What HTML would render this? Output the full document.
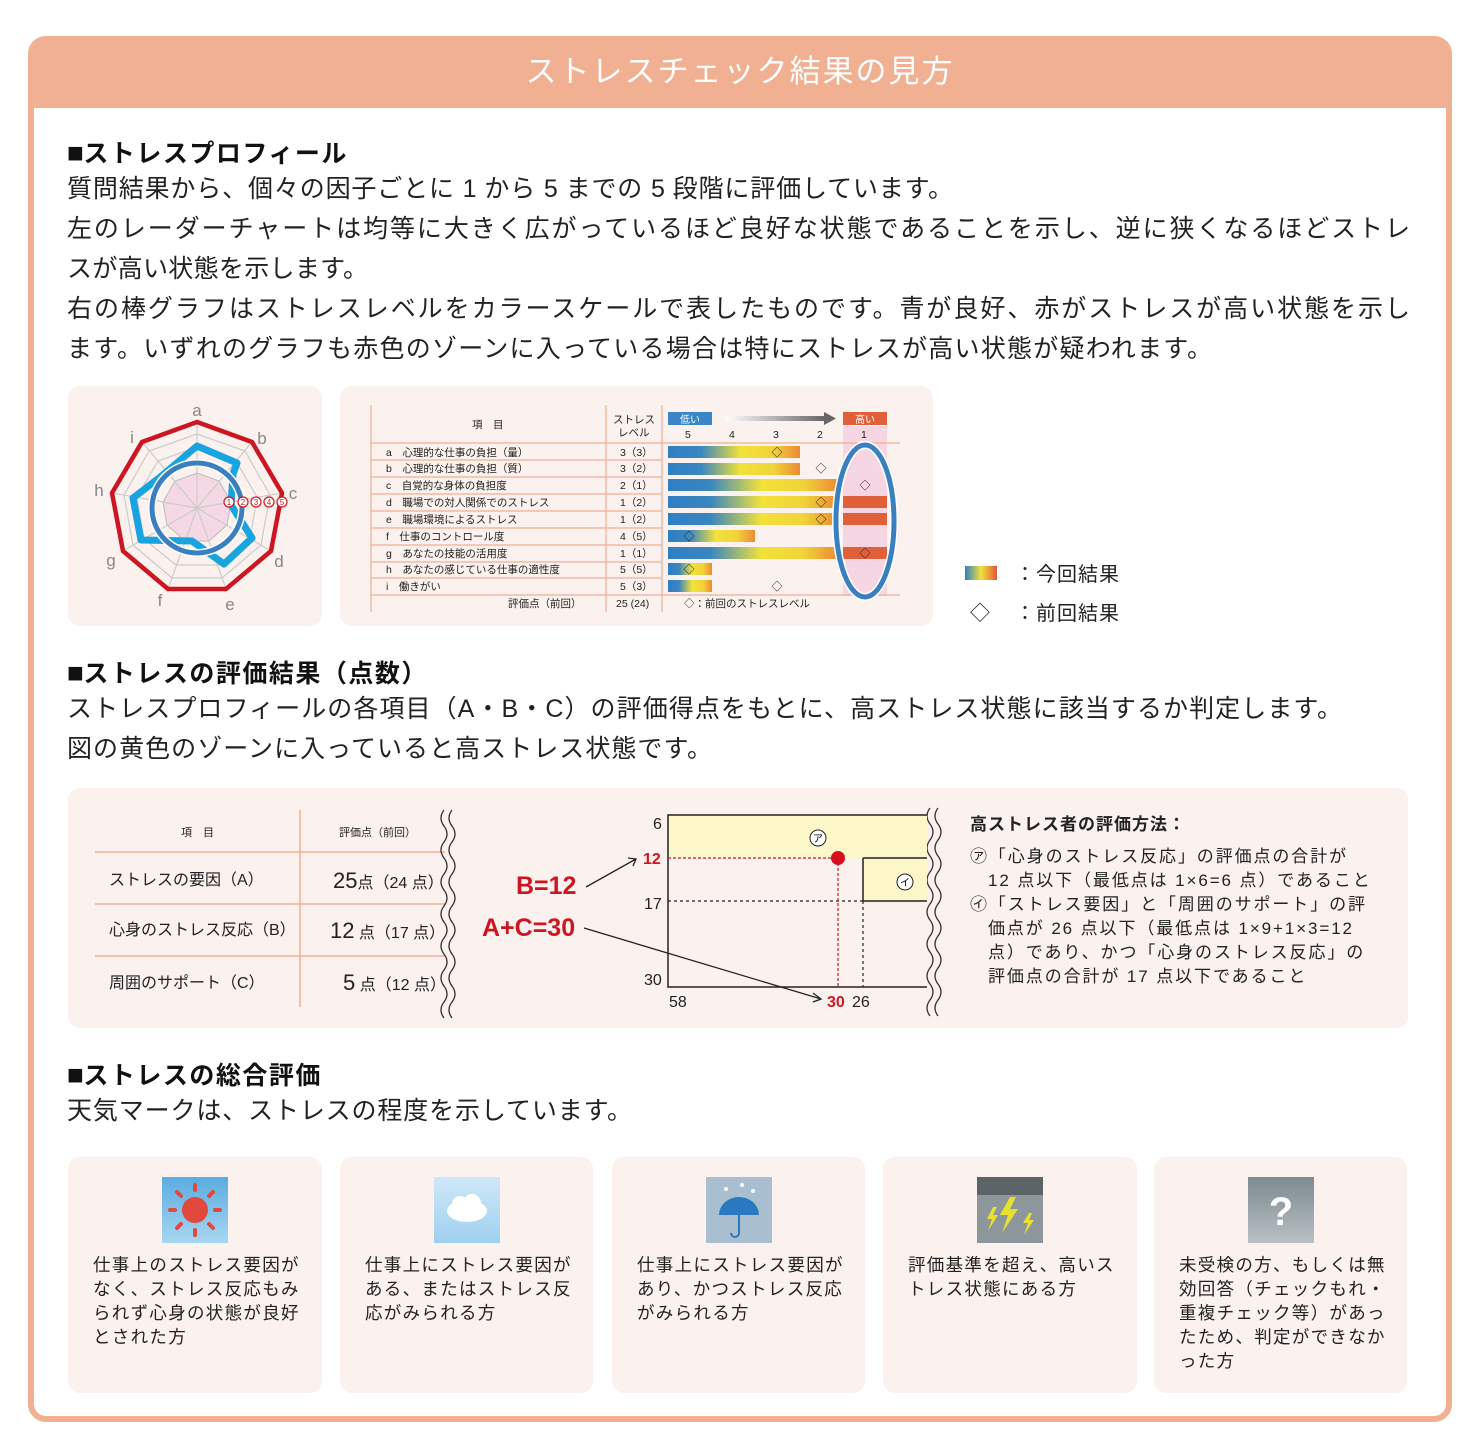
<!DOCTYPE html>
<html><head><meta charset="utf-8"><style>
*{margin:0;padding:0;box-sizing:border-box}
body{width:1472px;height:1432px;background:#fff;font-family:"Liberation Sans","Noto Sans CJK JP",sans-serif;color:#222;position:relative;overflow:hidden}
.frame{position:absolute;left:28px;top:36px;width:1424px;height:1386px;border:6px solid #f2b092;border-radius:18px;background:#fff}
.hdr{position:absolute;left:28px;top:36px;width:1424px;height:72px;background:#f2b092;border-radius:18px 18px 0 0;color:#fff;font-size:31px;text-align:center;line-height:72px;letter-spacing:2px}
.abs{position:absolute}
.h{position:absolute;left:67px;font-size:25px;font-weight:bold;color:#111;letter-spacing:1.5px}
.h b{font-size:28px;margin-right:-2px}
.p{position:absolute;left:67px;font-size:25px;line-height:40px;color:#222;white-space:nowrap}
.p div{height:40px;text-align:justify;text-align-last:justify;text-justify:inter-character;white-space:normal}
.box{position:absolute;background:#fbf1ee;border-radius:12px}
.card{position:absolute;top:1157px;height:236px;background:#fbf1ee;border-radius:12px}
.card .t{position:absolute;left:25px;top:96px;font-size:17.5px;line-height:24px;color:#222;width:212px;letter-spacing:1.3px}
.card svg{position:absolute;top:20px;left:50%;margin-left:-33px}
</style></head><body>
<div class="frame"></div>
<div class="hdr">ストレスチェック結果の見方</div>

<div class="h" style="top:134px"><b>■</b>ストレスプロフィール</div>
<div class="p" style="top:169px">
<div style="width:886px">質問結果から、個々の因子ごとに 1 から 5 までの 5 段階に評価しています。</div>
<div style="width:1343px">左のレーダーチャートは均等に大きく広がっているほど良好な状態であることを示し、逆に狭くなるほどストレ</div>
<div style="width:301px">スが高い状態を示します。</div>
<div style="width:1343px">右の棒グラフはストレスレベルをカラースケールで表したものです。青が良好、赤がストレスが高い状態を示し</div>
<div style="width:1145px">ます。いずれのグラフも赤色のゾーンに入っている場合は特にストレスが高い状態が疑われます。</div>
</div>

<div class="box" style="left:68px;top:386px;width:254px;height:240px"></div>
<svg class="abs" style="left:0;top:0" width="1472" height="1432">
<defs><linearGradient id="bg" x1="0" x2="1"><stop offset="0" stop-color="#2f7fc4"/><stop offset="0.25" stop-color="#3a86c0"/><stop offset="0.55" stop-color="#f2e23a"/><stop offset="0.8" stop-color="#f1d23a"/><stop offset="1" stop-color="#eb8a34"/></linearGradient>
<linearGradient id="lg" x1="0" x2="1"><stop offset="0" stop-color="#2f7fc4"/><stop offset="0.5" stop-color="#f2e23a"/><stop offset="1" stop-color="#e2553a"/></linearGradient>
<linearGradient id="ar" x1="0" x2="1"><stop offset="0" stop-color="#fff"/><stop offset="1" stop-color="#666"/></linearGradient></defs>
<!-- radar -->
<g transform="translate(197,508)">
<polygon points="0,-35 22,-27 34,-6 30,17 12,33 -12,33 -30,17 -34,-6 -22,-27" fill="#f4d9e4" stroke="#bbb" stroke-width="1"/>
<g fill="none" stroke="#ccc" stroke-width="1.2">
<polygon points="0,-48 31,-37 47,-8 42,24 16,45 -16,45 -42,24 -47,-8 -31,-37"/>
<polygon points="0,-61 39,-47 60,-11 53,31 21,57 -21,57 -53,31 -60,-11 -39,-47"/>
<polygon points="0,-74 48,-57 73,-13 64,37 25,70 -25,70 -64,37 -73,-13 -48,-57"/>
<path d="M0,0L0,-86M0,0L55,-66M0,0L85,-15M0,0L74,43M0,0L29,81M0,0L-29,81M0,0L-74,43M0,0L-85,-15M0,0L-55,-66"/></g>
<polygon points="0,-86 55,-66 85,-15 74,43 29,81 -29,81 -74,43 -85,-15 -55,-66" fill="none" stroke="#cc1722" stroke-width="4.5"/>
<polygon points="0,-62 40,-45 36,-34 34,-3 55,30 27,56 -5,33 -56,32 -64,-10 -38,-30" fill="none" stroke="#18a4df" stroke-width="7" stroke-linejoin="round"/>
<circle r="45" fill="none" stroke="#fff" stroke-width="8"/>
<circle r="45" fill="none" stroke="#3a7fc0" stroke-width="5"/>
<g font-size="17" fill="#888" text-anchor="middle" font-family="Liberation Sans,sans-serif"><text x="0" y="-92">a</text><text x="65" y="-64">b</text><text x="96" y="-9">c</text><text x="82" y="59">d</text><text x="33" y="102">e</text><text x="-37" y="98">f</text><text x="-86" y="58">g</text><text x="-98" y="-12">h</text><text x="-65" y="-65">i</text></g>
<g fill="#fff" stroke="#cc1722" stroke-width="1.2">
<circle cx="32" cy="-6" r="5"/><circle cx="46" cy="-6" r="5"/><circle cx="59" cy="-6" r="5"/><circle cx="72" cy="-6" r="5"/><circle cx="85" cy="-6" r="5"/></g>
<g fill="#cc1722" font-size="8" text-anchor="middle"><text x="32" y="-3">1</text><text x="46" y="-3">2</text><text x="59" y="-3">3</text><text x="72" y="-3">4</text><text x="85" y="-3">5</text></g>
</g>

<!-- bar chart -->
<rect x="340" y="386" width="593" height="240" rx="12" fill="#fbf1ee"/>
<rect x="843" y="426" width="44" height="170" fill="#f7d6e4"/>
<rect x="843" y="412" width="44" height="13" fill="#e0603a"/><text x="865" y="423" fill="#fff" font-size="10" text-anchor="middle">高い</text>
<rect x="668" y="412" width="44" height="13" fill="#3a86c8"/><text x="690" y="423" fill="#fff" font-size="10" text-anchor="middle">低い</text>
<rect x="725" y="416" width="100" height="5" fill="url(#ar)"/><polygon points="824,412 836,418.5 824,425" fill="#666"/>
<g stroke="#f0b090" stroke-width="1.2">
<line x1="371" y1="405" x2="371" y2="612"/><line x1="606" y1="405" x2="606" y2="612"/><line x1="662" y1="405" x2="662" y2="612"/>
<line x1="371" y1="443" x2="900" y2="443"/>
<line x1="371" y1="460" x2="662" y2="460"/><line x1="371" y1="477" x2="662" y2="477"/><line x1="371" y1="494" x2="662" y2="494"/><line x1="371" y1="511" x2="662" y2="511"/><line x1="371" y1="528" x2="662" y2="528"/><line x1="371" y1="545" x2="662" y2="545"/><line x1="371" y1="562" x2="662" y2="562"/><line x1="371" y1="578" x2="662" y2="578"/>
<line x1="371" y1="595" x2="900" y2="595"/></g>
<g font-size="10.5" fill="#222">
<text x="472" y="428">項　目</text><text x="613" y="423">ストレス</text><text x="618" y="436">レベル</text>
<text x="685" y="438">5</text><text x="729" y="438">4</text><text x="773" y="438">3</text><text x="817" y="438">2</text><text x="861" y="438">1</text>
<text x="386" y="456">a　心理的な仕事の負担（量）</text><text x="386" y="472">b　心理的な仕事の負担（質）</text><text x="386" y="489">c　自覚的な身体の負担度</text><text x="386" y="506">d　職場での対人関係でのストレス</text><text x="386" y="523">e　職場環境によるストレス</text><text x="386" y="540">f　仕事のコントロール度</text><text x="386" y="557">g　あなたの技能の活用度</text><text x="386" y="573">h　あなたの感じている仕事の適性度</text><text x="386" y="590">i　働きがい</text>
<text x="620" y="456">3（3）</text><text x="620" y="472">3（2）</text><text x="620" y="489">2（1）</text><text x="620" y="506">1（2）</text><text x="620" y="523">1（2）</text><text x="620" y="540">4（5）</text><text x="620" y="557">1（1）</text><text x="620" y="573">5（5）</text><text x="620" y="590">5（3）</text>
<text x="508" y="607">評価点（前回）</text><text x="616" y="607">25 (24)</text><text x="684" y="607">◇：前回のストレスレベル</text></g>
<g fill="url(#bg)">
<rect x="668" y="446" width="132" height="12"/><rect x="668" y="463" width="132" height="12"/><rect x="668" y="479" width="170" height="12"/><rect x="668" y="496" width="170" height="12"/><rect x="668" y="513" width="170" height="12"/><rect x="668" y="530" width="87" height="12"/><rect x="668" y="547" width="170" height="12"/><rect x="668" y="563" width="44" height="12"/><rect x="668" y="580" width="44" height="12"/></g>
<g fill="#e0603a"><rect x="843" y="496" width="44" height="12"/><rect x="843" y="513" width="44" height="12"/><rect x="843" y="547" width="44" height="12"/></g>
<g font-size="11" fill="#222" text-anchor="middle"><text x="777" y="456">◇</text><text x="821" y="472">◇</text><text x="865" y="489">◇</text><text x="821" y="506">◇</text><text x="821" y="523">◇</text><text x="689" y="540">◇</text><text x="865" y="557">◇</text><text x="689" y="573">◇</text><text x="777" y="590">◇</text></g>
<ellipse cx="865" cy="521" rx="29" ry="76" fill="none" stroke="#fff" stroke-width="8"/>
<ellipse cx="865" cy="521" rx="29" ry="76" fill="none" stroke="#3a80c0" stroke-width="5"/>
<!-- legend -->
<rect x="965" y="566" width="32" height="14" fill="url(#lg)"/>
<text x="1015" y="581" font-size="20" fill="#222" letter-spacing="1">：今回結果</text>
<text x="970" y="620" font-size="20" fill="#222">◇</text>
<text x="1015" y="620" font-size="20" fill="#222" letter-spacing="1">：前回結果</text>

<!-- evaluation box -->
<rect x="68" y="788" width="1340" height="240" rx="12" fill="#fbf1ee"/>
<g stroke="#f0b090" stroke-width="1.5"><line x1="300" y1="810" x2="300" y2="1007"/><line x1="95" y1="852" x2="445" y2="852"/><line x1="95" y1="904" x2="445" y2="904"/><line x1="95" y1="956" x2="445" y2="956"/></g>
<g font-size="11" fill="#222"><text x="181" y="836">項　目</text><text x="339" y="836">評価点（前回）</text></g>
<g font-size="16" fill="#222"><text x="109" y="885">ストレスの要因（A）</text><text x="109" y="935">心身のストレス反応（B）</text><text x="109" y="988">周囲のサポート（C）</text>
<text x="333" y="888"><tspan font-size="22">25</tspan>点（24 点）</text><text x="330" y="938"><tspan font-size="22">12</tspan> 点（17 点）</text><text x="343" y="990"><tspan font-size="22">5</tspan> 点（12 点）</text></g>
<g fill="none" stroke="#333" stroke-width="1.3">
<path d="M444,810 q-6,8 0,16 q6,8 0,16 q-6,8 0,16 q6,8 0,16 q-6,8 0,16 q6,8 0,16 q-6,8 0,16 q6,8 0,16 q-6,8 0,16 q6,8 0,16 q-6,8 0,16 q6,8 0,16 q-6,8 0,16"/>
<path d="M452,810 q-6,8 0,16 q6,8 0,16 q-6,8 0,16 q6,8 0,16 q-6,8 0,16 q6,8 0,16 q-6,8 0,16 q6,8 0,16 q-6,8 0,16 q6,8 0,16 q-6,8 0,16 q6,8 0,16 q-6,8 0,16"/>
<path d="M930,808 q-6,8 0,16 q6,8 0,16 q-6,8 0,16 q6,8 0,16 q-6,8 0,16 q6,8 0,16 q-6,8 0,16 q6,8 0,16 q-6,8 0,16 q6,8 0,16 q-6,8 0,16 q6,8 0,16 q-6,8 0,16"/>
<path d="M938,808 q-6,8 0,16 q6,8 0,16 q-6,8 0,16 q6,8 0,16 q-6,8 0,16 q6,8 0,16 q-6,8 0,16 q6,8 0,16 q-6,8 0,16 q6,8 0,16 q-6,8 0,16 q6,8 0,16 q-6,8 0,16"/></g>
<rect x="668" y="815" width="259" height="43" fill="#fcf6c8"/>
<rect x="863" y="858" width="64" height="43" fill="#fcf6c8"/>
<g stroke="#222" stroke-width="1.5" fill="none"><path d="M927,815H668V987H927"/><path d="M863,858H927M863,858V901H927"/></g>
<g stroke="#222" stroke-width="1.2" stroke-dasharray="3,3"><line x1="668" y1="901" x2="863" y2="901"/><line x1="863" y1="901" x2="863" y2="987"/></g>
<g stroke="#cc1722" stroke-width="1.2" stroke-dasharray="3,2"><line x1="668" y1="858" x2="838" y2="858"/><line x1="838" y1="858" x2="838" y2="987"/></g>
<circle cx="838" cy="858" r="7" fill="#d8101c"/>
<circle cx="818" cy="838" r="8" fill="#fff" stroke="#222"/><text x="818" y="842" font-size="10" text-anchor="middle">ア</text>
<circle cx="905" cy="882" r="8" fill="#fff" stroke="#222"/><text x="905" y="886" font-size="10" text-anchor="middle">イ</text>
<g font-size="16" fill="#222"><text x="653" y="829">6</text><text x="644" y="909">17</text><text x="644" y="985">30</text><text x="669" y="1007">58</text><text x="852" y="1007">26</text></g>
<g fill="#cc1722" font-weight="bold"><text x="643" y="864" font-size="16">12</text><text x="827" y="1007" font-size="16">30</text><text x="516" y="894" font-size="25">B=12</text><text x="482" y="936" font-size="25">A+C=30</text></g>
<g stroke="#222" stroke-width="1.3" fill="none"><path d="M586,887L636,859M628,858L636,859L633,866"/><path d="M584,928L821,999M813,993L821,999L813,1002"/></g>
<g font-size="17" fill="#222" letter-spacing="1.9"><text x="970" y="830" font-weight="bold" letter-spacing="1">高ストレス者の評価方法：</text>
<text x="970" y="862">㋐「心身のストレス反応」の評価点の合計が</text>
<text x="988" y="886">12 点以下（最低点は 1×6=6 点）であること</text>
<text x="970" y="910">㋑「ストレス要因」と「周囲のサポート」の評</text>
<text x="988" y="934">価点が 26 点以下（最低点は 1×9+1×3=12</text>
<text x="988" y="958">点）であり、かつ「心身のストレス反応」の</text>
<text x="988" y="982">評価点の合計が 17 点以下であること</text></g>
</svg>

<div class="h" style="top:654px"><b>■</b>ストレスの評価結果（点数）</div>
<div class="p" style="top:689px">
<div style="width:1275px">ストレスプロフィールの各項目（A・B・C）の評価得点をもとに、高ストレス状態に該当するか判定します。</div>
<div style="width:645px">図の黄色のゾーンに入っていると高ストレス状態です。</div>
</div>

<div class="h" style="top:1056px"><b>■</b>ストレスの総合評価</div>
<div class="p" style="top:1091px"><div style="width:565px">天気マークは、ストレスの程度を示しています。</div></div>

<div class="card" style="left:68px;width:254px"><svg width="66" height="66"><defs><linearGradient id="s1" x1="0" y1="0" x2="0" y2="1"><stop offset="0" stop-color="#5aace0"/><stop offset="1" stop-color="#a8d6f2"/></linearGradient></defs><rect width="66" height="66" fill="url(#s1)"/><circle cx="33" cy="33" r="13" fill="#e2483c"/><g stroke="#e2483c" stroke-width="4" stroke-linecap="round"><path d="M33,8v5M33,53v5M8,33h5M53,33h5M15,15l4,4M47,47l4,4M15,51l4-4M47,19l4-4"/></g></svg><div class="t">仕事上のストレス要因がなく、ストレス反応もみられず心身の状態が良好とされた方</div></div>
<div class="card" style="left:340px;width:253px"><svg width="66" height="66"><defs><linearGradient id="s2" x1="0" y1="0" x2="0" y2="1"><stop offset="0" stop-color="#cfe8f8"/><stop offset="1" stop-color="#9fd0f0"/></linearGradient></defs><rect width="66" height="66" fill="url(#s2)"/><ellipse cx="33" cy="34" rx="20" ry="11" fill="#fff"/><circle cx="26" cy="27" r="8" fill="#fff"/><circle cx="38" cy="26" r="9" fill="#fff"/></svg><div class="t">仕事上にストレス要因がある、またはストレス反応がみられる方</div></div>
<div class="card" style="left:612px;width:253px"><svg width="66" height="66"><rect width="66" height="66" fill="#a9bfcf"/><path d="M13,38a20,18 0 0 1 40,0z" fill="#2a78c0"/><path d="M33,38v18a4,4 0 0 1-8,0" stroke="#2a78c0" stroke-width="2" fill="none"/><g fill="#fff"><circle cx="20" cy="12" r="2"/><circle cx="36" cy="8" r="2"/><circle cx="47" cy="14" r="2"/></g></svg><div class="t">仕事上にストレス要因があり、かつストレス反応がみられる方</div></div>
<div class="card" style="left:883px;width:254px"><svg width="66" height="66"><rect width="66" height="66" fill="#8d969a"/><rect width="66" height="18" fill="#5d6468"/><path d="M33,20l-10,18h8l-6,18l16-24h-8l6-12z" fill="#e8e030"/><path d="M16,30l-6,12h5l-4,12l10-16h-5l4-8z" fill="#e8e030"/><path d="M52,36l-6,10h5l-4,12l10-15h-5l3-7z" fill="#e8e030"/></svg><div class="t">評価基準を超え、高いストレス状態にある方</div></div>
<div class="card" style="left:1154px;width:253px"><svg width="66" height="66"><defs><linearGradient id="s5" x1="0" y1="0" x2="0" y2="1"><stop offset="0" stop-color="#7d8a90"/><stop offset="1" stop-color="#b8c0c4"/></linearGradient></defs><rect width="66" height="66" fill="url(#s5)"/><text x="33" y="48" font-size="40" font-weight="bold" fill="#fff" text-anchor="middle" font-family="Liberation Sans,sans-serif">?</text></svg><div class="t">未受検の方、もしくは無効回答（チェックもれ・重複チェック等）があったため、判定ができなかった方</div></div>
</body></html>
